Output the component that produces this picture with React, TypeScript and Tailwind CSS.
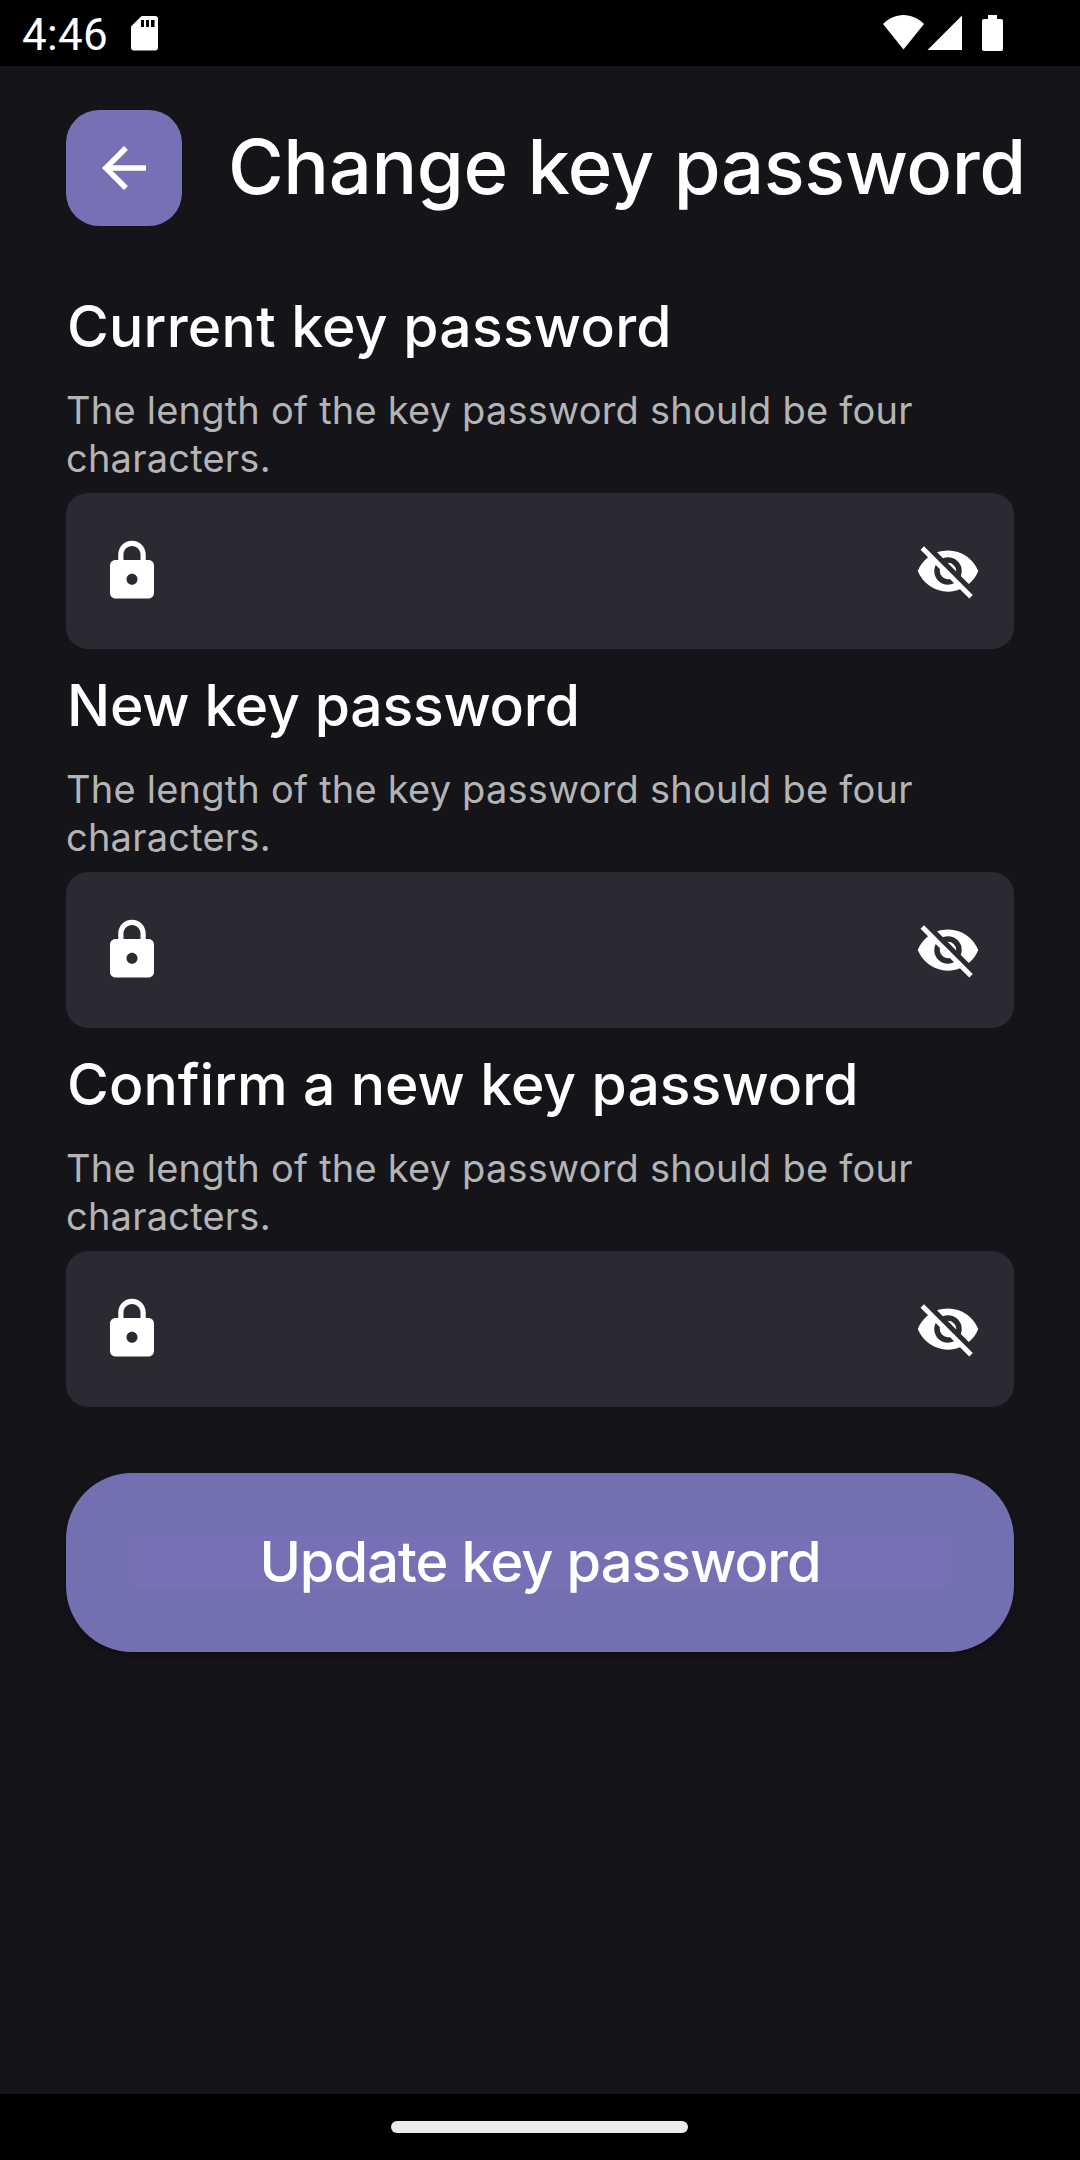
import React from "react";

const fields = [
  { id: "current", title: "Current key password", tracking: "tracking-[0.26px]" },
  { id: "new", title: "New key password", tracking: "tracking-[-0.18px]" },
  { id: "confirm", title: "Confirm a new key password", tracking: "tracking-[0.08px]" },
];

function StatusBar() {
  return (
    <div className="flex h-[66px] shrink-0 items-start bg-black pl-[22px] text-white">
      <span className="w-[109px] font-['Roboto',sans-serif] text-[44px] leading-[71px] tracking-[0.3px]">4:46</span>
      <svg className="mt-4 h-[35px] w-[27px]" viewBox="0 0 27 35" fill="currentColor">
        <path
          fillRule="evenodd"
          d="M10.5 0H24a3 3 0 0 1 3 3v28.500a3 3 0 0 1-3 3H3a3 3 0 0 1-3-3V10.500ZM10 4v7h3V4Zm5 0v7h3V4Zm5 0v7h3.500V4Z"
        />
      </svg>
      <div className="ml-auto flex pr-[77px]">
        <svg className="mt-[15px] h-[35px] w-[41px]" viewBox="0 0 41 35" fill="currentColor">
          <path d="M0 9C5.500 3.500 12.500 0 20.500 0S35.500 3.500 41 9L20.500 34.500Z" />
        </svg>
        <svg className="mt-[15px] ml-[3px] h-[35px] w-[35px]" viewBox="0 0 35 35" fill="currentColor">
          <path d="M0.500 35H35V0.500Z" />
        </svg>
        <svg className="mt-[15px] ml-5 h-9 w-[21px]" viewBox="0 0 21 36" fill="currentColor">
          <path d="M6 0h9v4h4a2 2 0 0 1 2 2v28a2 2 0 0 1-2 2H2a2 2 0 0 1-2-2V6a2 2 0 0 1 2-2h4Z" />
        </svg>
      </div>
    </div>
  );
}

function BackIcon() {
  return (
    <svg className="size-[66px]" viewBox="0 0 24 24" fill="currentColor">
      <path d="M20 11H7.830l5.590-5.590L12 4l-8 8 8 8 1.410-1.410L7.830 13H20v-2z" />
    </svg>
  );
}

function LockIcon() {
  return (
    <svg className="size-[66px]" viewBox="0 0 24 24" fill="currentColor">
      <path d="M18 8h-1V6c0-2.760-2.240-5-5-5S7 3.240 7 6v2H6c-1.100 0-2 .9-2 2v10c0 1.100.9 2 2 2h12c1.100 0 2-.9 2-2V10c0-1.100-.9-2-2-2zm-6 9c-1.100 0-2-.9-2-2s.9-2 2-2 2 .9 2 2-.9 2-2 2zm3.100-9H8.900V6c0-1.710 1.390-3.100 3.100-3.100s3.100 1.390 3.100 3.100v2z" />
    </svg>
  );
}

function EyeOffIcon() {
  return (
    <svg className="size-[66px]" viewBox="0 0 24 24" fill="currentColor">
      <path d="M11.83,9L15,12.16C15,12.11 15,12.05 15,12A3,3 0 0,0 12,9C11.94,9 11.89,9 11.83,9M7.53,9.8L9.08,11.35C9.03,11.56 9,11.77 9,12A3,3 0 0,0 12,15C12.22,15 12.44,14.97 12.65,14.92L14.2,16.47C13.53,16.8 12.79,17 12,17A5,5 0 0,1 7,12C7,11.21 7.2,10.47 7.53,9.8M2,4.27L4.28,6.55L4.73,7C3.08,8.3 1.78,10 1,12C2.73,16.39 7,19.5 12,19.5C13.55,19.5 15.03,19.2 16.38,18.66L16.81,19.08L19.73,22L21,20.73L3.27,3M12,7A5,5 0 0,1 17,12C17,12.64 16.87,13.26 16.64,13.82L19.57,16.75C21.07,15.5 22.27,13.86 23,12C21.27,7.61 17,4.5 12,4.5C10.6,4.5 9.26,4.75 8,5.2L10.17,7.35C10.74,7.13 11.35,7 12,7Z" />
    </svg>
  );
}

export default function App() {
  return (
    <div className="flex h-[2160px] w-[1080px] flex-col overflow-hidden bg-[#151419] font-['Inter',sans-serif] text-white">
      <StatusBar />
      <main className="flex flex-1 flex-col px-[66px] pt-11">
        <header className="flex items-start">
          <button aria-label="Back" className="flex size-[116px] shrink-0 items-center justify-center rounded-[33px] bg-[#7571b4]">
            <BackIcon />
          </button>
          <h1 className="ml-[46px] text-[76px] leading-[113px] font-medium tracking-[-0.41px] whitespace-nowrap">
            Change key password
          </h1>
        </header>

        <div className="mt-[71px] flex flex-col gap-[27px]">
          {fields.map((field) => (
            <section key={field.id} className="flex flex-col">
              <h2 className={`pl-px text-[57px] leading-[60px] font-medium whitespace-nowrap ${field.tracking}`}>{field.title}</h2>
              <p className="mt-[29px] text-[38px] leading-[48px] tracking-[0.22px] text-[#b4b4b5]">
                The length of the key password should be four characters.
              </p>
              <div className="mt-[11px] flex h-[156px] items-center justify-between rounded-[22px] bg-[#2a2a33] px-[33px]">
                <LockIcon />
                <EyeOffIcon />
              </div>
            </section>
          ))}
        </div>

        <button className="mt-[66px] flex h-[179px] items-center justify-center rounded-[66px] bg-[#7370b2] px-16 shadow-[0_4px_9px_rgba(0,0,0,0.3)]">
          <span className="flex h-[53px] w-full items-center justify-center bg-[#7571b4] text-[56px] leading-[53px] font-medium tracking-[-0.97px] whitespace-nowrap">
            Update key password
          </span>
        </button>
      </main>
      <div className="flex h-[66px] shrink-0 items-center bg-black pl-[391px]">
        <div className="h-3 w-[297px] rounded-full bg-[#ebebeb]" />
      </div>
    </div>
  );
}
